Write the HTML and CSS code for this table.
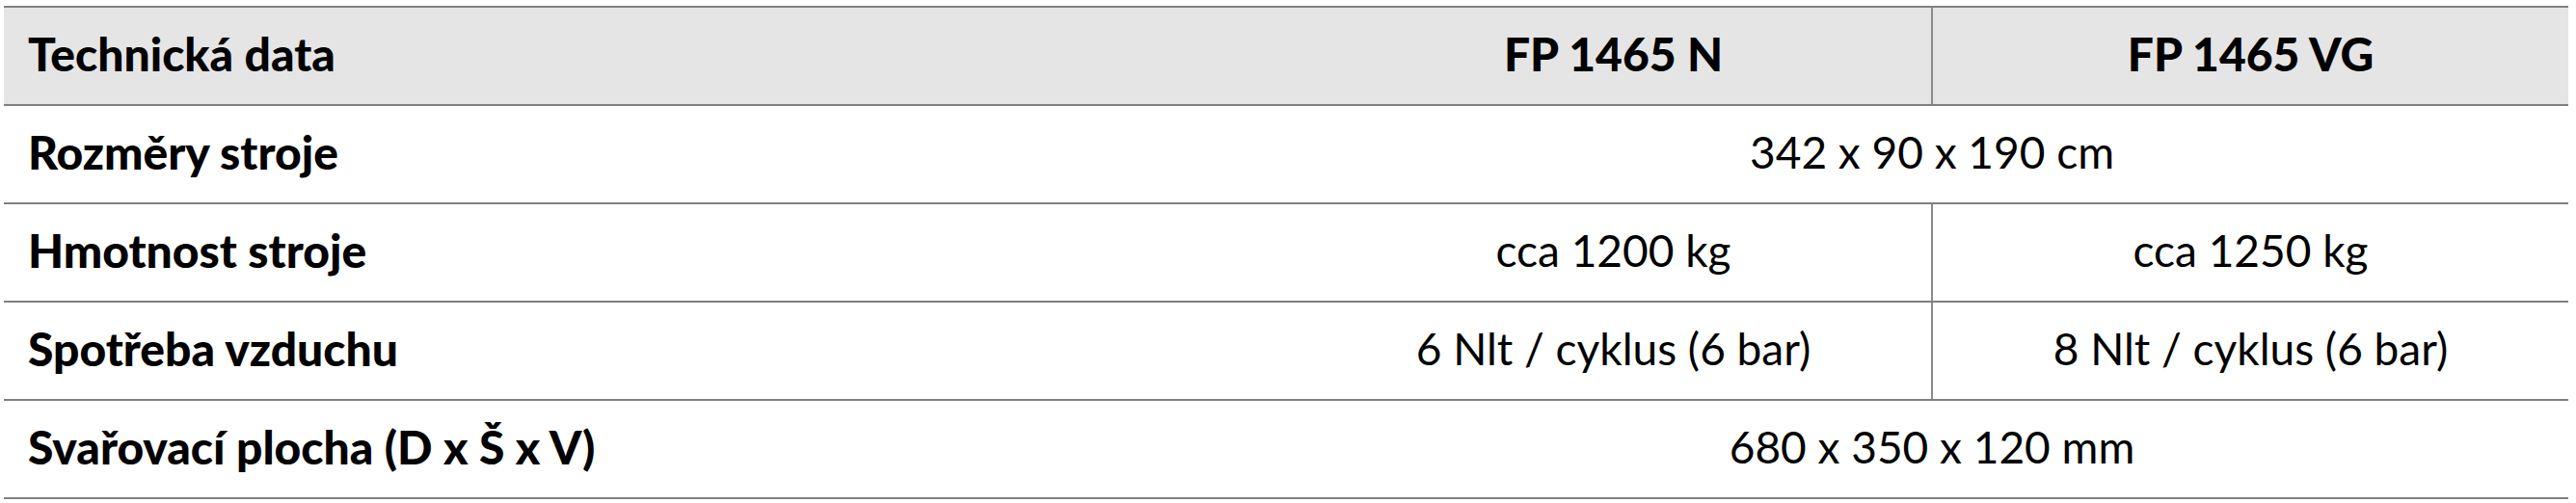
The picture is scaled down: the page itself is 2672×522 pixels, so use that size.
FILE: index.html
```html
<!DOCTYPE html>
<html lang="cs">
<head>
<meta charset="utf-8">
<link rel="stylesheet" href="styles.css">
</head>
<body>
<table class="spec">
  <colgroup>
    <col class="c-label">
    <col class="c-val">
    <col class="c-val">
  </colgroup>
  <thead>
    <tr>
      <th class="label">Technická data</th>
      <th class="val">FP 1465 N</th>
      <th class="val div">FP 1465 VG</th>
    </tr>
  </thead>
  <tbody>
    <tr>
      <td class="label">Rozměry stroje</td>
      <td class="val" colspan="2">342 x 90 x 190 cm</td>
    </tr>
    <tr>
      <td class="label">Hmotnost stroje</td>
      <td class="val">cca 1200 kg</td>
      <td class="val div">cca 1250 kg</td>
    </tr>
    <tr>
      <td class="label">Spotřeba vzduchu</td>
      <td class="val">6 Nlt / cyklus (6 bar)</td>
      <td class="val div">8 Nlt / cyklus (6 bar)</td>
    </tr>
    <tr>
      <td class="label">Svařovací plocha (D x Š x V)</td>
      <td class="val" colspan="2">680 x 350 x 120 mm</td>
    </tr>
  </tbody>
</table>
</body>
</html>
```

FILE: styles.css
```css
html, body {
  margin: 0;
  padding: 0;
  background: #ffffff;
}
body {
  padding: 6px 8px 0 4px;
  font-family: Lato, "Open Sans", "Liberation Sans", sans-serif;
  color: #000;
}
.spec {
  width: 2660px;
  border-collapse: collapse;
  table-layout: fixed;
}
.c-label { width: 1340px; }
.c-val { width: 660px; }
.spec th, .spec td {
  border-top: 2px solid #808080;
  border-bottom: 2px solid #808080;
  padding: 0 0 5px 0;
  height: 95px;
  vertical-align: middle;
}
.spec thead th {
  background: #e5e5e5;
  font-weight: 900;
  font-size: 48px;
}
.spec .label {
  text-align: left;
  padding-left: 25px;
  font-weight: 900;
  font-size: 48px;
}
.spec td.val {
  text-align: center;
  font-weight: 400;
  font-size: 46px;
}
.spec th.val {
  text-align: center;
}
.spec .div {
  border-left: 2px solid #8a8a8a;
}
```
